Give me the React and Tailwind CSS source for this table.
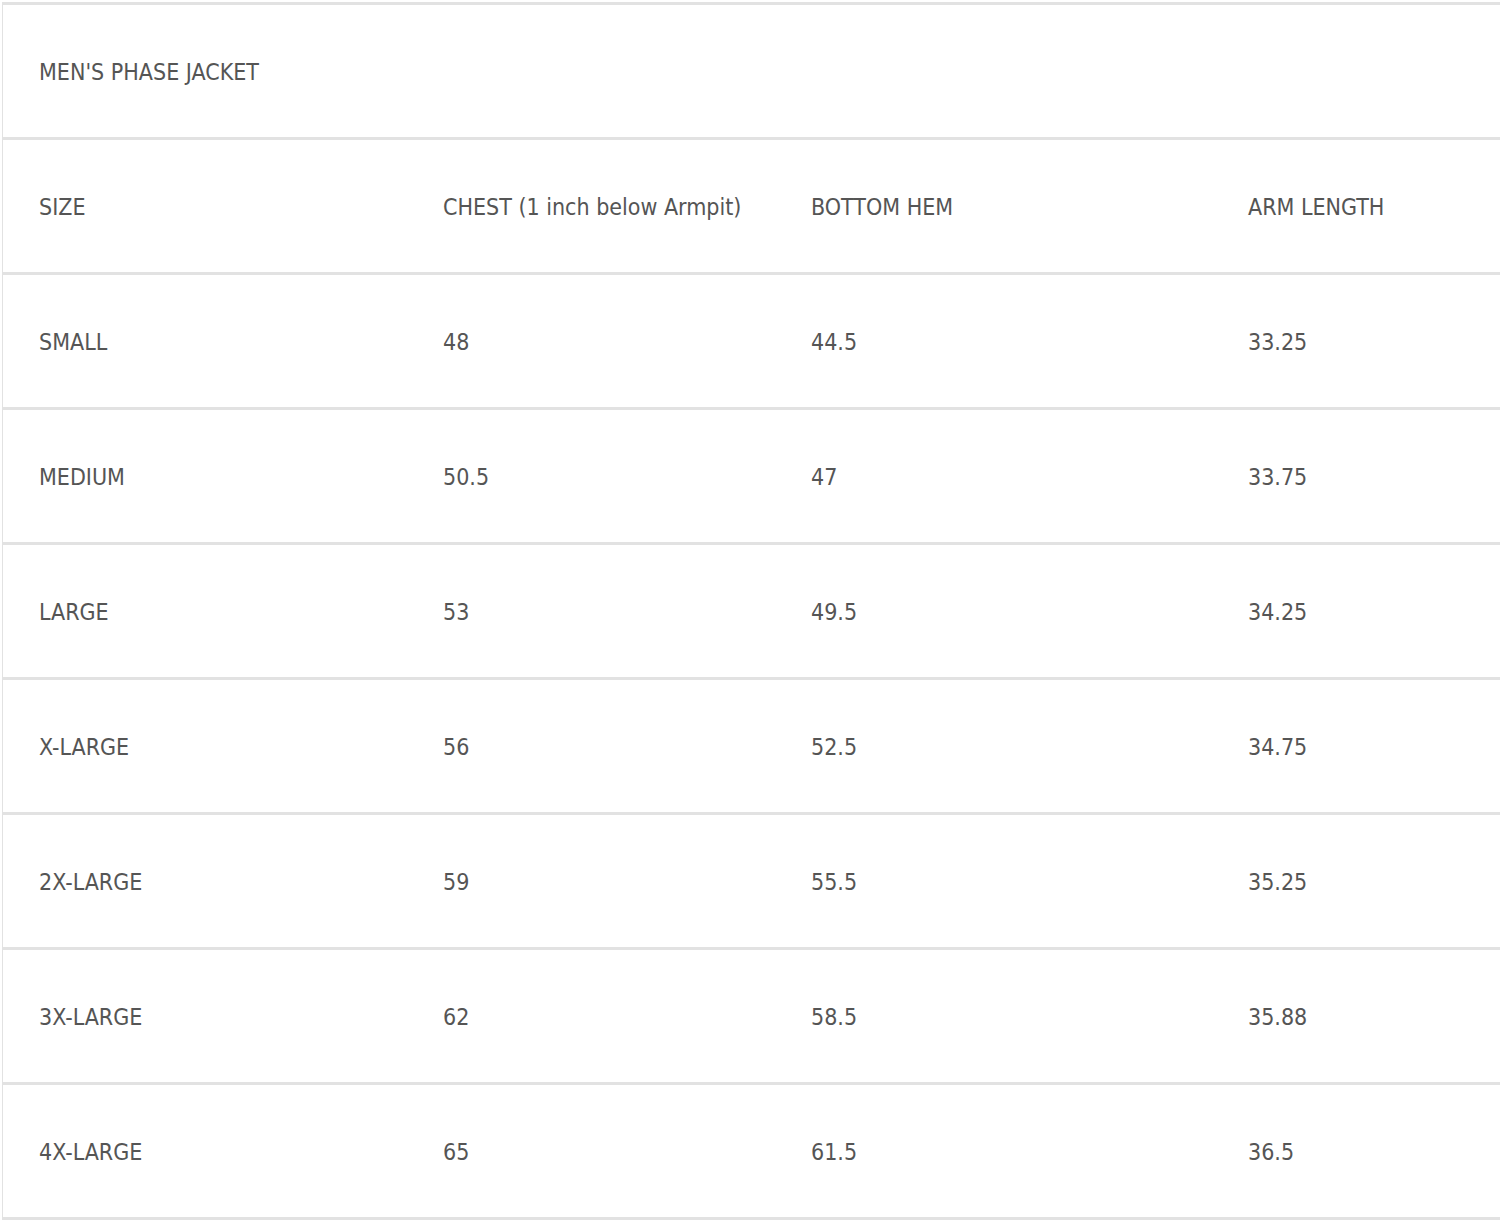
const rows = [
  ["SMALL", "48", "44.5", "33.25"],
  ["MEDIUM", "50.5", "47", "33.75"],
  ["LARGE", "53", "49.5", "34.25"],
  ["X-LARGE", "56", "52.5", "34.75"],
  ["2X-LARGE", "59", "55.5", "35.25"],
  ["3X-LARGE", "62", "58.5", "35.88"],
  ["4X-LARGE", "65", "61.5", "36.5"],
];

const header = ["SIZE", "CHEST (1 inch below Armpit)", "BOTTOM HEM", "ARM LENGTH"];

function Row({ cells }) {
  return (
    <div className="grid grid-cols-[404px_368px_437px_1fr] h-[135px] border-b-[3px] border-[#e2e2e2]">
      {cells.map((c, i) => (
        <div key={i} className="flex items-center pl-[36px] pt-[3px] whitespace-nowrap">
          {c}
        </div>
      ))}
    </div>
  );
}

export default function App() {
  return (
    <div className="bg-white w-[1500px] h-[1223px] overflow-hidden pt-[2px]">
      <div
        className="ml-[2px] border-l border-[#e2e2e2] border-t-[3px] text-[23px] text-[#555555] leading-none"
        style={{ fontFamily: '"DejaVu Sans Condensed", "DejaVu Sans", Tahoma, sans-serif' }}
      >
        <div className="h-[135px] flex items-center pl-[36px] pt-[3px] border-b-[3px] border-[#e2e2e2]">
          MEN'S PHASE JACKET
        </div>
        <Row cells={header} />
        {rows.map((r) => (
          <Row key={r[0]} cells={r} />
        ))}
      </div>
    </div>
  );
}
